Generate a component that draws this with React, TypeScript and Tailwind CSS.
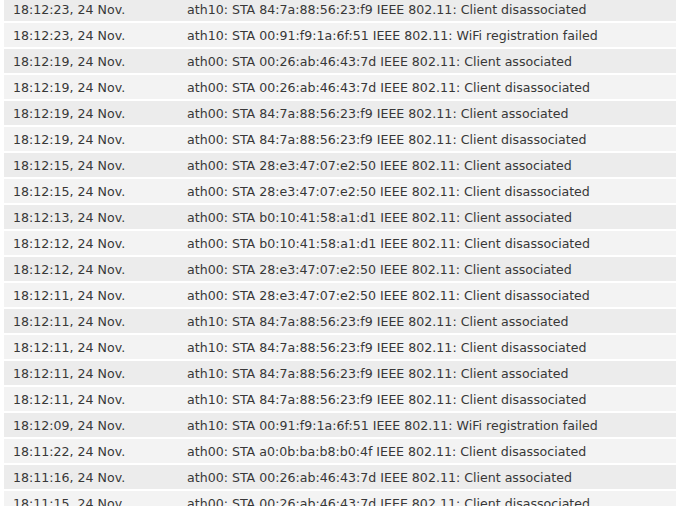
import React from "react";

type LogEntry = {
  time: string;
  msg: string;
};

const logs: LogEntry[] = [
  { time: "18:12:23, 24 Nov.", msg: "ath10: STA 84:7a:88:56:23:f9 IEEE 802.11: Client disassociated" },
  { time: "18:12:23, 24 Nov.", msg: "ath10: STA 00:91:f9:1a:6f:51 IEEE 802.11: WiFi registration failed" },
  { time: "18:12:19, 24 Nov.", msg: "ath00: STA 00:26:ab:46:43:7d IEEE 802.11: Client associated" },
  { time: "18:12:19, 24 Nov.", msg: "ath00: STA 00:26:ab:46:43:7d IEEE 802.11: Client disassociated" },
  { time: "18:12:19, 24 Nov.", msg: "ath00: STA 84:7a:88:56:23:f9 IEEE 802.11: Client associated" },
  { time: "18:12:19, 24 Nov.", msg: "ath00: STA 84:7a:88:56:23:f9 IEEE 802.11: Client disassociated" },
  { time: "18:12:15, 24 Nov.", msg: "ath00: STA 28:e3:47:07:e2:50 IEEE 802.11: Client associated" },
  { time: "18:12:15, 24 Nov.", msg: "ath00: STA 28:e3:47:07:e2:50 IEEE 802.11: Client disassociated" },
  { time: "18:12:13, 24 Nov.", msg: "ath00: STA b0:10:41:58:a1:d1 IEEE 802.11: Client associated" },
  { time: "18:12:12, 24 Nov.", msg: "ath00: STA b0:10:41:58:a1:d1 IEEE 802.11: Client disassociated" },
  { time: "18:12:12, 24 Nov.", msg: "ath00: STA 28:e3:47:07:e2:50 IEEE 802.11: Client associated" },
  { time: "18:12:11, 24 Nov.", msg: "ath00: STA 28:e3:47:07:e2:50 IEEE 802.11: Client disassociated" },
  { time: "18:12:11, 24 Nov.", msg: "ath10: STA 84:7a:88:56:23:f9 IEEE 802.11: Client associated" },
  { time: "18:12:11, 24 Nov.", msg: "ath10: STA 84:7a:88:56:23:f9 IEEE 802.11: Client disassociated" },
  { time: "18:12:11, 24 Nov.", msg: "ath10: STA 84:7a:88:56:23:f9 IEEE 802.11: Client associated" },
  { time: "18:12:11, 24 Nov.", msg: "ath10: STA 84:7a:88:56:23:f9 IEEE 802.11: Client disassociated" },
  { time: "18:12:09, 24 Nov.", msg: "ath10: STA 00:91:f9:1a:6f:51 IEEE 802.11: WiFi registration failed" },
  { time: "18:11:22, 24 Nov.", msg: "ath00: STA a0:0b:ba:b8:b0:4f IEEE 802.11: Client disassociated" },
  { time: "18:11:16, 24 Nov.", msg: "ath00: STA 00:26:ab:46:43:7d IEEE 802.11: Client associated" },
  { time: "18:11:15, 24 Nov.", msg: "ath00: STA 00:26:ab:46:43:7d IEEE 802.11: Client disassociated" },
];

export default function App() {
  return (
    <div className="w-[676px] h-[506px] overflow-hidden bg-white">
      <div
        className="flex flex-col gap-[2px] pl-[4px] mt-[-3px] text-[12.6px] text-[#383838]"
        style={{ fontFamily: '"DejaVu Sans", Verdana, sans-serif' }}
      >
        {logs.map((log, i) => (
          <div
            key={i}
            className={
              "flex items-center h-[24px] pt-[2px] whitespace-nowrap " +
              (i % 2 === 0 ? "bg-[#ececec]" : "bg-[#f3f3f3]")
            }
          >
            <div className="w-[183px] pl-[9px] shrink-0">{log.time}</div>
            <div>{log.msg}</div>
          </div>
        ))}
      </div>
    </div>
  );
}
